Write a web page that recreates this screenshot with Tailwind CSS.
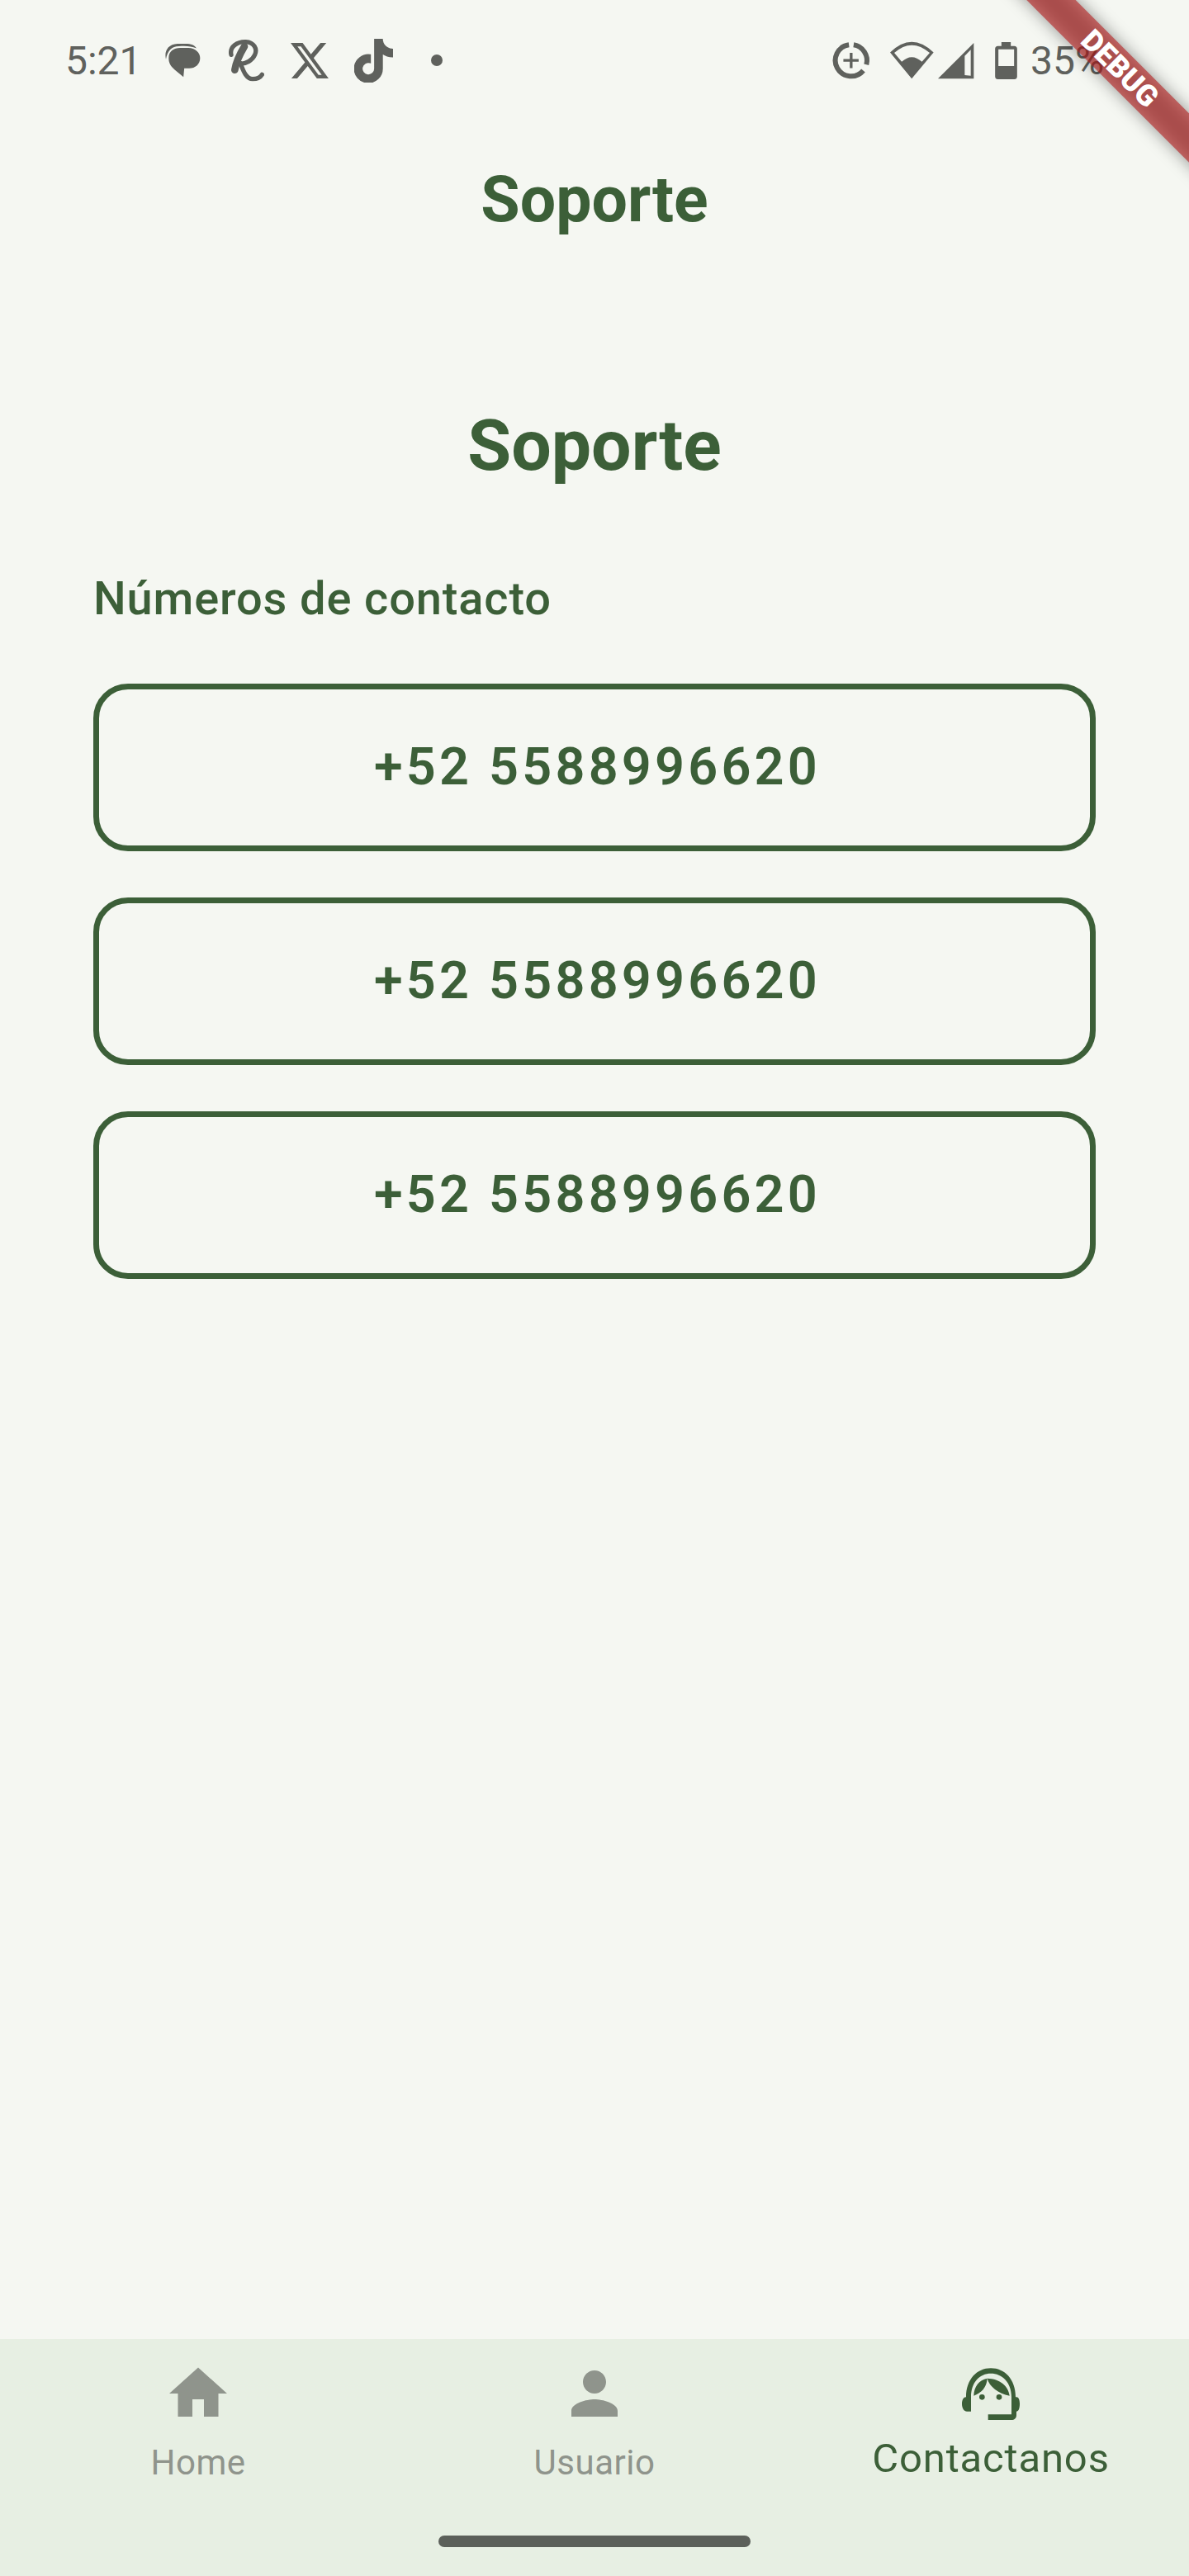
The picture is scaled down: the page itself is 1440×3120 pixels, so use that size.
<!DOCTYPE html>
<html lang="en">

<head>
    <meta charset="UTF-8">
    <meta name="viewport" content="width=device-width, initial-scale=1.0">
    <title>Soporte</title>
    <script src="https://cdn.jsdelivr.net/npm/@tailwindcss/browser@4"></script>
</head>

<body class="bg-[#f5f7f2] font-[Roboto,sans-serif] text-[#3c5f38]">
    <div class="relative w-[1440px] h-[3120px] overflow-hidden flex flex-col">
        <!-- status bar -->
        <div class="h-[146px] shrink-0 flex items-center pl-[79px] text-[#5f615d]">
            <span class="text-[48px] leading-none w-[121px] mt-[2px]">5:21</span>
            <svg class="w-[43px] h-[42px]" viewBox="30 40 130 127" fill="#5f615d"><path d="M33 100C26 70 40 45 75 43h30c20 0 33 5 40 17-20-8-35-10-65-8-25 0-42 16-47 48z"/><path d="M43 95c0-25 19-37 42-37h30c25 0 43 17 43 37 0 23-18 38-40 38h-18l-3 32-32-27C50 125 43 113 43 95z"/></svg>
            <svg class="w-[44px] h-[52px] ml-[33px]" viewBox="260 22 132 156" fill="none" stroke="#5f615d" stroke-linecap="round"><path stroke-width="16" d="M272 80c-7-30 23-48 53-47 30 2 43 25 33 47-8 20-33 33-53 33"/><path stroke-width="26" d="M320 50c-15 25-30 55-35 85"/><path stroke-width="16" d="M305 110c10 25 20 58 45 58 15 0 28-6 34-16"/></svg>
            <svg class="w-[46px] h-[43px] ml-[32px]" viewBox="1.250 2.250 21.600 19.500" preserveAspectRatio="none" fill="#5f615d"><path d="M18.244 2.250h3.308l-7.227 8.260 8.502 11.240H16.170l-5.214-6.817L4.990 21.750H1.680l7.730-8.835L1.254 2.250H8.080l4.713 6.231zm-1.161 17.520h1.833L7.084 4.126H5.117z"/></svg>
            <svg class="w-[47px] h-[53px] ml-[31px]" viewBox="0 0 448 512" fill="#5f615d" stroke="#5f615d" stroke-width="14"><path d="M448 209.910a210.060 210.060 0 0 1-122.770-39.250V349.380A162.550 162.550 0 1 1 185 188.310V278.200a74.620 74.620 0 1 0 52.230 71.180V0l88 0a121.180 121.180 0 0 0 1.860 22.170h0A122.180 122.180 0 0 0 381 102.390a121.430 121.430 0 0 0 67 20.140Z"/></svg>
            <span class="w-[14px] h-[14px] rounded-full bg-[#5f615d] ml-[46px]"></span>
            <div class="flex-1"></div>
            <svg class="w-[47px] h-[47px] mr-[23px]" viewBox="20 28 140 140" fill="none" stroke="#5f615d"><path stroke-width="18" d="M80 40.600A57 57 0 1 0 131.700 133.600"/><path stroke-width="18" d="M97 40.700A57 57 0 0 1 143 112"/><path stroke-width="10" d="M60 97h55M88 70v55"/></svg>
            <svg class="w-[53px] h-[46px]" viewBox="235 28 158 137"><path fill="#5f615d" fill-rule="evenodd" d="M235 68Q313-8 392 68L313 163zM250 70Q313 14 378 70L350 102Q313 68 277 102z"/></svg>
            <svg class="w-[44px] h-[45px] ml-[5px]" viewBox="408 30 132 135"><path fill="#5f615d" fill-rule="evenodd" d="M408 163L538 33V163zM505 150V80L527 58V152z"/></svg>
            <svg class="w-[27px] h-[45px] ml-[25px]" viewBox="615 28 80 135"><path fill="#5f615d" fill-rule="evenodd" d="M638 28h34v14h13c6 0 10 4 10 10v101c0 6-4 10-10 10h-60c-6 0-10-4-10-10V52c0-6 4-10 10-10h13zM627 54v61h57V54z"/></svg>
            <span class="text-[48px] leading-none ml-[16px] w-[92px] mt-[2px]">35%</span>
            <div class="w-[100px]"></div>
        </div>

        <!-- app bar -->
        <div class="h-[192px] shrink-0 flex items-center justify-center">
            <h1 class="text-[77px] leading-none font-bold">Soporte</h1>
        </div>

        <!-- content -->
        <main class="flex-1 px-[113px]">
            <h2 class="text-[86px] leading-none font-bold text-center mt-[159px]">Soporte</h2>
            <p class="text-[56px] leading-none font-medium tracking-[0.850px] mt-[114px] mb-[75px]">Números de contacto</p>
            <div class="flex flex-col gap-[56px]">
                <button class="h-[203px] w-full pl-[7px] border-[7px] border-[#3c5f38] rounded-[42px] text-[63px] font-semibold tracking-[4.200px]">+52 5588996620</button>
                <button class="h-[203px] w-full pl-[7px] border-[7px] border-[#3c5f38] rounded-[42px] text-[63px] font-semibold tracking-[4.200px]">+52 5588996620</button>
                <button class="h-[203px] w-full pl-[7px] border-[7px] border-[#3c5f38] rounded-[42px] text-[63px] font-semibold tracking-[4.200px]">+52 5588996620</button>
            </div>
        </main>

        <!-- bottom nav -->
        <nav class="h-[287px] shrink-0 bg-[#e7efe3] flex flex-col">
            <div class="grid grid-cols-3 pt-[24px] h-[238px]">
                <div class="flex flex-col items-center text-[#8f948c]">
                    <svg class="w-[84px] h-[84px]" viewBox="0 0 24 24" fill="#8f948c"><path d="M10 20v-6h4v6h5v-8h3L12 3 2 12h3v8z"/></svg>
                    <span class="text-[42px] leading-none mt-[21px] tracking-[0.500px]">Home</span>
                </div>
                <div class="flex flex-col items-center text-[#8f948c]">
                    <svg class="w-[84px] h-[84px]" viewBox="0 0 24 24" fill="#8f948c"><path d="M12 12c2.210 0 4-1.790 4-4s-1.790-4-4-4-4 1.790-4 4 1.790 4 4 4zm0 2c-2.670 0-8 1.340-8 4v2h16v-2c0-2.660-5.330-4-8-4z"/></svg>
                    <span class="text-[42px] leading-none mt-[21px] tracking-[0.500px]">Usuario</span>
                </div>
                <div class="flex flex-col items-center">
                    <svg class="w-[70px] h-[64px] mt-[11px]" viewBox="105 55 210 190" fill="#3c5f38"><path fill-rule="evenodd" d="M120 160C120 95 160 55 210 55s90 40 90 105h3c8 0 12 10 12 25s-4 27-12 27v13c0 12-8 18-18 18h-85v-20h85v-38V160c0-55-35-86-75-86s-72 31-72 86v52h-15c-10 0-18-12-18-27s6-25 15-25z"/><path d="M197 92c-30 5-48 30-49 63 27-10 47-30 49-63zM197 92c8 30 40 55 81 63-4-35-35-62-81-63z"/><circle cx="178" cy="160" r="10"/><circle cx="240" cy="160" r="10"/></svg>
                    <span class="text-[49px] leading-none mt-[21px] tracking-[0.850px]">Contactanos</span>
                </div>
            </div>
            <div class="w-[378px] h-[14px] rounded-full bg-[#5c605a] mx-auto"></div>
        </nav>

        <!-- debug banner -->
        <div class="absolute left-[1154px] top-[60px] w-[400px] h-[42px] rotate-45">
            <div class="absolute inset-0 bg-black/40 blur-[10px]"></div>
            <div class="absolute inset-0 pl-[6px] bg-[#b71c1c]/60 flex items-center justify-center text-white text-[36px] font-black leading-none">DEBUG</div>
        </div>
    </div>
</body>

</html>
